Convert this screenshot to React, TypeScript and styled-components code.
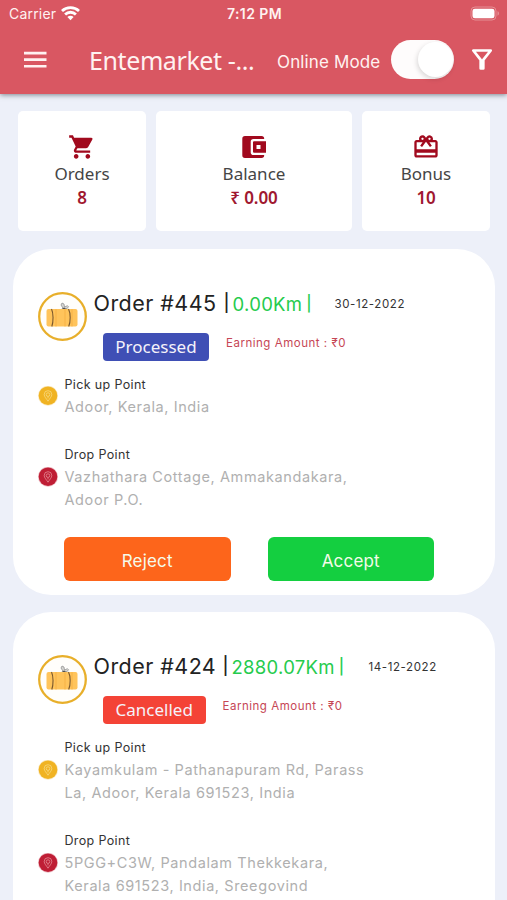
import React from "react";
import styled, { createGlobalStyle } from "styled-components";
import { MdShoppingCart, MdCardGiftcard } from "react-icons/md";

const GlobalStyle = createGlobalStyle`
  * { box-sizing: border-box; }
  html, body { margin: 0; padding: 0; background: #edf0f9; overflow: hidden; }
  body { font-family: Inter, "Liberation Sans", sans-serif; color: #222; }
`;

const Screen = styled.main`
  width: 507px;
  height: 900px;
  overflow: hidden;
  background: #edf0f9;
`;

const Header = styled.header`
  height: 94px;
  background: #d95762;
  color: #fff2f1;
  box-shadow: 0 1px 5px rgba(50, 60, 70, 0.6);
`;

const StatusBar = styled.div`
  height: 27px;
  padding: 0 7px 0 9px;
  display: grid;
  grid-template-columns: 1fr auto 1fr;
  align-items: center;
  font-size: 14px;
  line-height: 27px;
`;

const Carrier = styled.div`
  display: flex;
  align-items: center;
  gap: 5px;
  letter-spacing: 0.2px;
`;

const Clock = styled.div`
  font-size: 14px;
  font-weight: 600;
  letter-spacing: 0.4px;
`;

const BatterySlot = styled.div`
  display: flex;
  justify-content: flex-end;
`;

const Toolbar = styled.div`
  height: 65px;
  padding: 0 9px 0 20px;
  display: flex;
  align-items: center;

  svg { flex: none; }
`;

const Title = styled.h1`
  margin: 0 0 0 39px;
  width: 188px;
  font: 400 25px/36px "Noto Sans", sans-serif;
  letter-spacing: -0.4px;
  white-space: nowrap;
`;

const ModeLabel = styled.span`
  width: 114px;
  padding-top: 4px;
  font-size: 17px;
  letter-spacing: 0.13px;
  white-space: nowrap;
`;

const Toggle = styled.button`
  width: 63px;
  height: 39px;
  margin: 0 13px 0 0;
  padding: 2px 1px;
  border: 0;
  border-radius: 20px;
  background: #fefcfc;
  display: flex;
  justify-content: flex-end;
  flex: none;
`;

const Knob = styled.span`
  width: 35px;
  height: 35px;
  border-radius: 50%;
  background: #fff;
  box-shadow: -1px 2px 5px rgba(0, 0, 0, 0.15);
`;

const Stats = styled.section`
  display: grid;
  grid-template-columns: 128px 196px 128px;
  gap: 10px;
  padding: 17px 18px 18px;
`;

const StatCard = styled.div`
  height: 120px;
  padding-top: 22px;
  border-radius: 5px;
  background: #fff;
  display: flex;
  flex-direction: column;
  align-items: center;
  font: 400 17px/24px "Noto Sans", sans-serif;
  color: #454545;

  svg { color: #a10a1e; }
`;

const StatLabel = styled.span`
  margin-top: 1px;
`;

const StatValue = styled.strong`
  font-size: 17px;
  font-weight: 600;
  line-height: 23px;
  letter-spacing: -0.1px;
  color: #a01830;
`;

const OrderCard = styled.article`
  width: 482px;
  margin: 0 0 17px 13px;
  padding: 43px 25px 14px;
  border-radius: 38px;
  background: #fff;
`;

const OrderHead = styled.div`
  height: 81px;
  display: flex;
  gap: 7px;
`;

const Avatar = styled.div`
  width: 49px;
  height: 49px;
  flex: none;
`;

const HeadBody = styled.div`
  white-space: nowrap;
`;

const TitleRow = styled.div`
  height: 24px;
  display: flex;
  align-items: center;
`;

const OrderTitle = styled.h2<{ $width: number }>`
  width: ${(p) => p.$width}px;
  margin: 0 3px 2px -0.5px;
  display: flex;
  align-items: center;
  justify-content: space-between;
  font-size: 21.5px;
  line-height: 24px;
  font-weight: 400;
  letter-spacing: 0.45px;
`;

const Bar = styled.span<{ $size: number }>`
  font-size: ${(p) => p.$size}px;
  font-weight: 500;
  letter-spacing: 0;
`;

const Distance = styled.span<{ $width: number }>`
  width: ${(p) => p.$width}px;
  display: flex;
  align-items: center;
  gap: 4px;
  line-height: 24px;
  font-size: 18.5px;
  letter-spacing: 0.3px;
  color: #25cb4d;
`;

const OrderDate = styled.time`
  font-size: 11.5px;
  letter-spacing: 0.6px;
  color: #333;
`;

const StatusRow = styled.div`
  display: flex;
  align-items: flex-start;
  margin: 17px 0 0 9px;
`;

const Chip = styled.span<{ $color: string; $width: number }>`
  width: ${(p) => p.$width}px;
  height: 28px;
  border-radius: 4px;
  background: ${(p) => p.$color};
  color: #f5f2fa;
  text-align: center;
  font: 400 17px/28px "Noto Sans", sans-serif;
`;

const Earning = styled.span`
  margin: 2px 0 0 17px;
  font-size: 11.5px;
  line-height: 16px;
  letter-spacing: 0.52px;
  color: #c64655;
`;

const Point = styled.div`
  display: flex;
  align-items: center;
  gap: 7px;
  margin-bottom: 25px;
`;

const PointText = styled.div`
  display: flex;
  flex-direction: column;
  margin-left: -0.5px;
  font-size: 14.5px;
  line-height: 23px;
  letter-spacing: 0.6px;
  color: #b0b0b0;
  white-space: nowrap;
`;

const PointLabel = styled.span`
  padding-top: 2px;
  font-size: 12.5px;
  line-height: 20px;
  letter-spacing: 0.35px;
  color: #333;
`;

const Actions = styled.div`
  display: flex;
  gap: 37px;
  padding: 1px 0 0 26px;
`;

const ActionButton = styled.button<{ $color: string }>`
  width: 166.5px;
  height: 44px;
  padding: 4px 0 0;
  border: 0;
  border-radius: 6px;
  background: ${(p) => p.$color};
  color: #f5fbea;
  font: 400 17px Inter, sans-serif;
  letter-spacing: 0.2px;
`;

const MenuIcon = () => (
  <svg width="30" height="30" viewBox="0 0 30 30" fill="currentColor">
    <path d="M4 6.700h22.500v2.700H4zM4 13.300h22.500V16H4zM4 19.900h22.500v2.700H4z" />
  </svg>
);

const FilterIcon = () => (
  <svg width="30" height="30" viewBox="0 0 30 30" fill="none" stroke="#fff" strokeWidth="2.700" strokeLinejoin="round">
    <path d="M6.300 5.500h17.400L16.300 14.800V23.500h-2.600v-8.700z" />
  </svg>
);

const WifiIcon = () => (
  <svg width="19" height="15" viewBox="0 0 19 15" fill="none" stroke="#fff" strokeWidth="2.800">
    <path d="M1 5C5.700.500 13.300.500 18 5" />
    <path d="M4.100 8.400c3-2.900 7.800-2.900 10.800 0" />
    <path d="M6.400 10.900c1.800-1.600 4.400-1.600 6.200 0L9.500 14.200z" fill="#fff" stroke="none" />
  </svg>
);

const BatteryIcon = () => (
  <svg width="30" height="15" viewBox="0 0 30 15">
    <rect x="1" y="1" width="25" height="13" rx="4" fill="none" stroke="#e58f94" />
    <rect x="2.500" y="2.700" width="22" height="9.600" rx="2.400" fill="#fff" />
    <path d="M27.500 5.300c2 .5 2 3.900 0 4.400z" fill="#e58f94" />
  </svg>
);

const WalletIcon = () => (
  <svg width="28" height="28" viewBox="0 0 28 28" fill="currentColor">
    <path d="M5 3h16.500a2.700 2.700 0 0 1 2.700 2.700v.3H13.500a2.800 2.800 0 0 0-2.800 2.800v10.400a2.800 2.800 0 0 0 2.800 2.800h10.700v.3a2.700 2.700 0 0 1-2.700 2.700H5A2.700 2.700 0 0 1 2.300 22.300V5.700A2.700 2.700 0 0 1 5 3z" />
    <path fillRule="evenodd" d="M14 8.200h12v11.600H14a1 1 0 0 1-1-1V9.200a1 1 0 0 1 1-1zM16.500 12v4h4v-4z" />
  </svg>
);

const ParcelIcon = () => (
  <svg width="49" height="49" viewBox="0 0 49 49">
    <circle cx="24.500" cy="24.500" r="23.300" fill="#fffefb" stroke="#e8af2a" strokeWidth="2.300" />
    <rect x="8.500" y="17" width="31" height="17.500" rx="2" fill="#ffc45b" />
    <path d="M18 17.200v17M27 17.200v17M34 17.200v17" stroke="#fbbb50" strokeWidth="2" />
    <path d="M13.500 17c2 4 2 13 .3 17.500M30.500 17c2.200 4 2.200 13 .2 17.500" fill="none" stroke="#79572d" strokeWidth="1.100" />
    <path d="M25.500 17l-2.500-4 1-2 2 1 .5 3 3-1.300 1 1-1.500 2-3-.5z" fill="#d6d6d2" stroke="#888" strokeWidth=".7" />
    <path d="M23.500 16.900l2.500-1.500 2 1.600z" fill="#505050" />
  </svg>
);

const PinIcon = ({ color, line }: { color: string; line: string }) => (
  <svg width="20" height="20" viewBox="0 0 20 20">
    <circle cx="10" cy="9.700" r="10" fill={color} opacity=".3" />
    <circle cx="10" cy="9.700" r="9.300" fill={color} />
    <g fill="none" stroke={line} strokeWidth=".8">
      <path d="M10 15.200C8.500 12.700 6.200 10.800 6.200 8.500a3.800 3.800 0 0 1 7.600 0c0 2.300-2.300 4.200-3.800 6.700z" />
      <circle cx="10" cy="8.600" r="1.800" />
      <path d="M10 10.400v2" />
    </g>
  </svg>
);

type Order = {
  id: string;
  distance: string;
  date: string;
  status: string;
  color: string;
  chipWidth: number;
  titleWidth: number;
  distanceWidth: number;
  pickup: string[];
  drop: string[];
  actions: boolean;
};

const orders: Order[] = [
  {
    id: "445", distance: "0.00Km", date: "30-12-2022", status: "Processed", color: "#3f4fb5",
    chipWidth: 106, titleWidth: 136, distanceWidth: 102,
    pickup: ["Adoor, Kerala, India"],
    drop: ["Vazhathara Cottage, Ammakandakara,", "Adoor P.O."],
    actions: true,
  },
  {
    id: "424", distance: "2880.07Km", date: "14-12-2022", status: "Cancelled", color: "#f44336",
    chipWidth: 102.500, titleWidth: 135, distanceWidth: 137,
    pickup: ["Kayamkulam - Pathanapuram Rd, Parass", "La, Adoor, Kerala 691523, India"],
    drop: ["5PGG+C3W, Pandalam Thekkekara,", "Kerala 691523, India, Sreegovind"],
    actions: false,
  },
];

const Place = ({ label, lines, color, line }: { label: string; lines: string[]; color: string; line: string }) => (
  <Point>
    <PinIcon color={color} line={line} />
    <PointText>
      <PointLabel>{label}</PointLabel>
      {lines.map((text) => <span key={text}>{text}</span>)}
    </PointText>
  </Point>
);

export default function App() {
  return (
    <Screen>
      <GlobalStyle />
      <Header>
        <StatusBar>
          <Carrier>Carrier <WifiIcon /></Carrier>
          <Clock>7:12 PM</Clock>
          <BatterySlot><BatteryIcon /></BatterySlot>
        </StatusBar>
        <Toolbar>
          <MenuIcon />
          <Title>Entemarket -...</Title>
          <ModeLabel>Online Mode</ModeLabel>
          <Toggle aria-label="Online mode"><Knob /></Toggle>
          <FilterIcon />
        </Toolbar>
      </Header>
      <Stats>
        <StatCard><MdShoppingCart size={28} /><StatLabel>Orders</StatLabel><StatValue>8</StatValue></StatCard>
        <StatCard><WalletIcon /><StatLabel>Balance</StatLabel><StatValue>₹ 0.00</StatValue></StatCard>
        <StatCard><MdCardGiftcard size={28} /><StatLabel>Bonus</StatLabel><StatValue>10</StatValue></StatCard>
      </Stats>
      {orders.map((o) => (
        <OrderCard key={o.id}>
          <OrderHead>
            <Avatar><ParcelIcon /></Avatar>
            <HeadBody>
              <TitleRow>
                <OrderTitle $width={o.titleWidth}>Order #{o.id}<Bar $size={17.5}>|</Bar></OrderTitle>
                <Distance $width={o.distanceWidth}>{o.distance}<Bar $size={15.5}>|</Bar></Distance>
                <OrderDate>{o.date}</OrderDate>
              </TitleRow>
              <StatusRow>
                <Chip $color={o.color} $width={o.chipWidth}>{o.status}</Chip>
                <Earning>Earning Amount : ₹0</Earning>
              </StatusRow>
            </HeadBody>
          </OrderHead>
          <Place label="Pick up Point" lines={o.pickup} color="#f0b323" line="#f8d982" />
          <Place label="Drop Point" lines={o.drop} color="#bf1e35" line="#e58c96" />
          {o.actions && (
            <Actions>
              <ActionButton $color="#fd651b">Reject</ActionButton>
              <ActionButton $color="#14cf40">Accept</ActionButton>
            </Actions>
          )}
        </OrderCard>
      ))}
    </Screen>
  );
}
